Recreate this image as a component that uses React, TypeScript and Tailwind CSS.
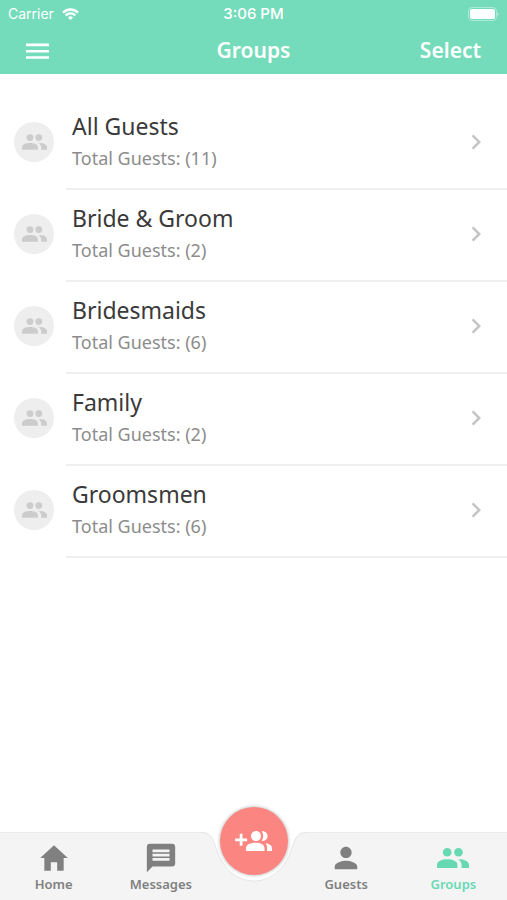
import type { ComponentType } from "react";
import { IoMdHome, IoMdPerson } from "react-icons/io";
import { MdChevronRight, MdMessage } from "react-icons/md";

type Group = {
  name: string;
  total: number;
};

type Tab = {
  label: string;
  icon: ComponentType<{ className?: string }>;
  iconClass: string;
  active?: boolean;
};

const groups: Group[] = [
  { name: "All Guests", total: 11 },
  { name: "Bride & Groom", total: 2 },
  { name: "Bridesmaids", total: 6 },
  { name: "Family", total: 2 },
  { name: "Groomsmen", total: 6 },
];

const leftTabs: Tab[] = [
  { label: "Home", icon: IoMdHome, iconClass: "size-[34px]" },
  { label: "Messages", icon: MdMessage, iconClass: "size-[34px]" },
];

const rightTabs: Tab[] = [
  { label: "Guests", icon: IoMdPerson, iconClass: "size-[30px]" },
  { label: "Groups", icon: PeopleIcon, iconClass: "h-5 w-8", active: true },
];

export default function App() {
  return (
    <div className="flex min-h-screen flex-col bg-white font-['Noto_Sans',sans-serif]">
      <header className="bg-[#74dcba] text-white">
        <StatusBar />
        <div className="grid h-[46px] grid-cols-3 items-center px-[26px]">
          <button aria-label="Menu" className="justify-self-start">
            <svg viewBox="0 0 23 16" className="h-4 w-[23px]" aria-hidden="true">
              <path d="M0 1.9h23M0 8.2h23M0 14.5h23" stroke="currentColor" strokeWidth="2.6" />
            </svg>
          </button>
          <h1 className="text-center text-[21px] font-semibold">Groups</h1>
          <button className="justify-self-end text-[21px] font-semibold">Select</button>
        </div>
      </header>

      <main className="flex-1 pt-6">
        <ul>
          {groups.map((group) => (
            <GroupRow key={group.name} group={group} />
          ))}
        </ul>
      </main>

      <nav className="sticky bottom-0 flex h-[68px] border-t border-[#ececec] bg-[#f4f4f4]">
        {leftTabs.map((tab) => (
          <TabButton key={tab.label} tab={tab} />
        ))}
        <div className="relative w-[78px] shrink-0">
          <Notch />
          <button
            aria-label="Add guests"
            className="absolute -top-[26px] left-1/2 flex size-[68px] -translate-x-1/2 items-center justify-center rounded-full bg-[#fb8580] text-white shadow-[0_0_3px_1px_rgba(0,0,0,0.2)]"
          >
            <AddPeopleIcon className="h-5 w-[37px]" />
          </button>
        </div>
        {rightTabs.map((tab) => (
          <TabButton key={tab.label} tab={tab} />
        ))}
      </nav>
    </div>
  );
}

function StatusBar() {
  return (
    <div className="grid h-7 grid-cols-3 items-center px-2 font-[Inter,sans-serif] text-sm">
      <div className="flex items-center gap-2">
        <span>Carrier</span>
        <svg viewBox="0 0 17 12" className="h-3 w-[17px]" aria-hidden="true">
          <path
            d="M1 4.6a10.6 10.6 0 0 1 15 0M3.7 7.4a6.8 6.8 0 0 1 9.6 0"
            fill="none"
            stroke="currentColor"
            strokeWidth="2.4"
          />
          <path d="M8.5 12 5.9 9.4a3.8 3.8 0 0 1 5.2 0z" fill="currentColor" />
        </svg>
      </div>
      <span className="text-center text-[15px] font-medium">3:06 PM</span>
      <svg viewBox="0 0 31 14" className="h-3.5 w-[31px] justify-self-end" aria-hidden="true">
        <rect x="0.5" y="0.5" width="28" height="13" rx="3.5" fill="none" stroke="currentColor" opacity="0.4" />
        <rect x="2" y="2" width="25" height="10" rx="2" fill="currentColor" />
        <path d="M29.500 5c1.500.6 1.500 3.400 0 4z" fill="currentColor" opacity="0.5" />
      </svg>
    </div>
  );
}

function GroupRow({ group }: { group: Group }) {
  return (
    <li>
      <button className="flex w-full items-center pl-3.5 text-left">
        <span className="mr-3 mb-1 flex size-10 shrink-0 items-center justify-center rounded-full bg-[#eeeeee] text-[#cccccc]">
          <PeopleIcon className="h-4 w-[25px]" />
        </span>
        <span className="flex h-[92px] flex-1 items-center justify-between border-b-2 border-[#efefef] pr-4 pb-0.5 pl-1.5">
          <span>
            <span className="block text-[23px] leading-8 text-[#3a3a3a]">{group.name}</span>
            <span className="block text-lg leading-8 text-[#8c8c8c]">
              Total Guests: ({group.total})
            </span>
          </span>
          <MdChevronRight className="size-[30px] text-[#c4c4c4]" />
        </span>
      </button>
    </li>
  );
}

function TabButton({ tab }: { tab: Tab }) {
  const Icon = tab.icon;

  return (
    <button
      className={`flex flex-1 basis-0 flex-col items-center justify-end pb-2 ${
        tab.active ? "text-[#66d9b3]" : "text-[#808080]"
      }`}
    >
      <span className="flex h-9 items-center">
        <Icon className={tab.iconClass} />
      </span>
      <span className="text-[13px] leading-4 font-semibold">{tab.label}</span>
    </button>
  );
}

function PeopleIcon({ className }: { className?: string }) {
  return (
    <svg viewBox="0 0 32 20" className={className} fill="currentColor" aria-hidden="true">
      <circle cx="10.2" cy="4.3" r="4.3" />
      <circle cx="21.5" cy="4.3" r="4.3" />
      <path d="M0 20v-3.2c0-3.8 5-5.6 10.2-5.6s10.2 1.8 10.2 5.6V20z" />
      <path d="M21 11.2c6-.1 11 1.8 11 5.6V20h-7.4v-3c0-2.5-1.5-4.5-3.6-5.8z" />
    </svg>
  );
}

function AddPeopleIcon({ className }: { className?: string }) {
  return (
    <svg viewBox="0 0 37 20" className={className} fill="currentColor" aria-hidden="true">
      <path d="M4.7 2.8h2.8v4.6h4.6v2.8H7.5v4.6H4.7v-4.6H.1V7.4h4.6z" />
      <circle cx="21" cy="5.1" r="5" />
      <path d="M26.6.3c3.5-.6 6 1.8 6 4.8s-2.5 5.4-6 4.8c1-1.3 1.6-3 1.6-4.8S27.600 1.600 26.600.3z" />
      <path d="M11 20v-2.8c0-3.8 5-5.5 9.7-5.5s8.800 1.700 8.800 5.500V20z" />
      <path d="M30.500 12.300c3.900.6 6.500 2.100 6.500 4.900V20h-5v-3c0-1.900-.5-3.500-1.500-4.700z" />
    </svg>
  );
}

// White cut-out in the tab bar that holds the round button
function Notch() {
  return (
    <svg
      viewBox="0 0 106 50"
      className="absolute -top-px left-1/2 h-[50px] w-[106px] -translate-x-1/2"
      aria-hidden="true"
    >
      <path d="M0 0C8 0 11 4 14 13C20 35 35 49 53 49S86 35 92 13C95 4 98 0 106 0z" fill="#ffffff" />
      <path
        d="M0 .5C8 .5 11 4 14 13C20 35 35 49 53 49S86 35 92 13C95 4 98 .5 106 .5"
        fill="none"
        stroke="#e6e6e6"
      />
    </svg>
  );
}
